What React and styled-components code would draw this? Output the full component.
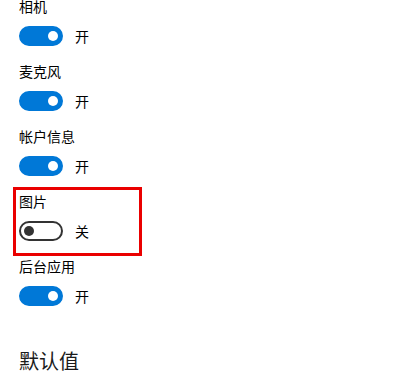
import React from 'react';
import styled, { createGlobalStyle } from 'styled-components';

const GlobalStyle = createGlobalStyle`
  html, body {
    margin: 0;
    padding: 0;
    background: #fff;
  }
  body {
    font-family: 'Noto Sans CJK SC', 'Noto Sans', sans-serif;
    color: #000;
  }
`;

const Page = styled.div`
  width: 418px;
  height: 380px;
  overflow: hidden;
  padding-left: 19px;
  box-sizing: border-box;
`;

const List = styled.div`
  margin-top: -1px;
`;

const Item = styled.div`
  margin-bottom: ${(p) => (p.$last ? '0' : '18px')};
`;

const Label = styled.div`
  font-size: 14px;
  line-height: 14px;
  height: 14px;
`;

const Row = styled.div`
  display: flex;
  align-items: center;
  margin-top: 13px;
  height: 20px;
`;

const Track = styled.div`
  width: 44px;
  height: 20px;
  box-sizing: border-box;
  border-radius: 10px;
  border: 2px solid ${(p) => (p.$on ? '#0078d7' : '#333')};
  background: ${(p) => (p.$on ? '#0078d7' : '#fff')};
  display: flex;
  align-items: center;
  justify-content: ${(p) => (p.$on ? 'flex-end' : 'flex-start')};
  padding: 0 3px;
`;

const Knob = styled.div`
  width: 10px;
  height: 10px;
  border-radius: 50%;
  background: ${(p) => (p.$on ? '#fff' : '#333')};
`;

const State = styled.span`
  font-size: 14px;
  line-height: 20px;
  margin-left: 12px;
`;

const Highlight = styled.div`
  width: 129px;
  box-sizing: border-box;
  margin: -7px 0 3px -6px;
  padding: 4px 0 12px 3px;
  border: 3px solid #ea0000;
`;

const Heading = styled.h2`
  margin: 41px 0 0;
  font-size: 20px;
  line-height: 28px;
  font-weight: 400;
  color: #1a1a1a;
`;

function Toggle({ label, on, last }) {
  return (
    <Item $last={last}>
      <Label>{label}</Label>
      <Row>
        <Track $on={on}>
          <Knob $on={on} />
        </Track>
        <State>{on ? '开' : '关'}</State>
      </Row>
    </Item>
  );
}

export default function App() {
  return (
    <Page>
      <GlobalStyle />
      <List>
        <Toggle label="相机" on />
        <Toggle label="麦克风" on />
        <Toggle label="帐户信息" on />
        <Highlight>
          <Toggle label="图片" on={false} last />
        </Highlight>
        <Toggle label="后台应用" on last />
      </List>
      <Heading>默认值</Heading>
    </Page>
  );
}
